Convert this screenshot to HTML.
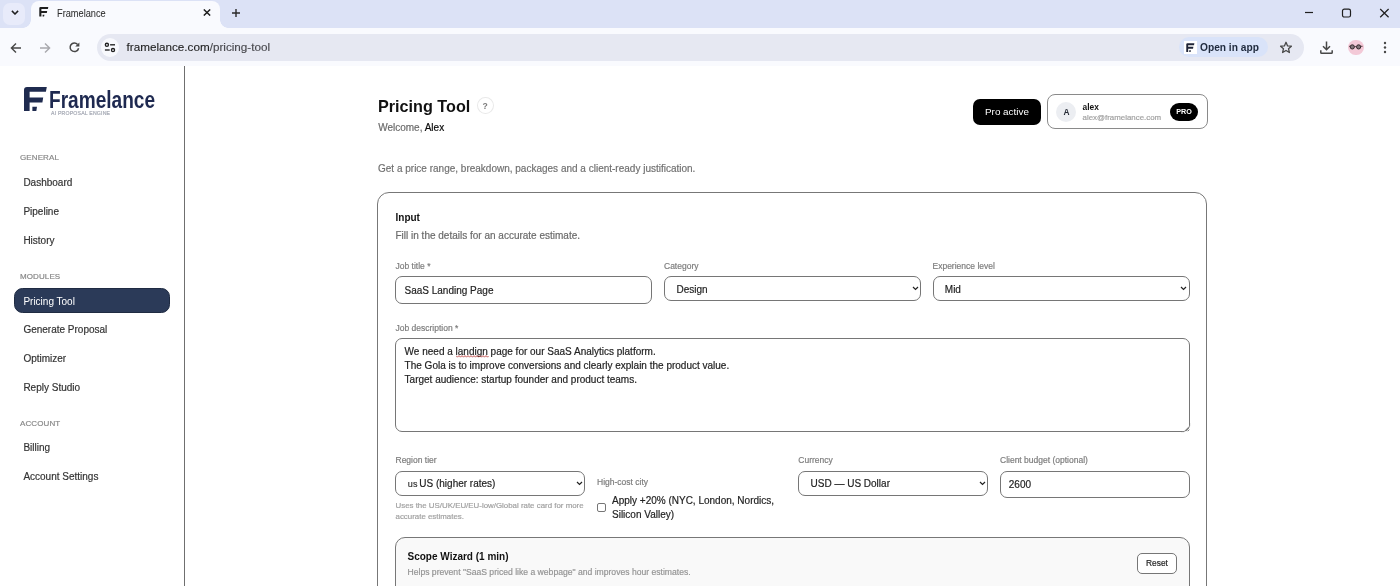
<!DOCTYPE html>
<html><head><meta charset="utf-8">
<style>
*{box-sizing:border-box}
html,body{margin:0;padding:0}
body{will-change:transform;width:1400px;height:586px;overflow:hidden;position:relative;background:#fff;font-family:"Liberation Sans",sans-serif;color:#111}
.a{position:absolute}
.t{position:absolute;line-height:1;white-space:nowrap;-webkit-text-stroke-width:0.18px}
/* chrome */
#strip{left:0;top:0;width:1400px;height:28px;background:#dce2f6}
#tabsearch{left:3px;top:2.5px;width:22px;height:22px;border-radius:7px;background:#e8ebfa}
#tab{left:31px;top:1px;width:189px;height:27px;background:#f9fafe;border-radius:8px 8px 0 0}
#tab:before,#tab:after{content:"";position:absolute;bottom:0;width:8px;height:8px;background:radial-gradient(circle at 0 0,transparent 7.5px,#f9fafe 8px)}
#tab:before{left:-8px;background:radial-gradient(circle at 0 0,transparent 7.5px,#f9fafe 8px)}
#tab:after{right:-8px;background:radial-gradient(circle at 100% 0,transparent 7.5px,#f9fafe 8px)}
#toolbar{left:0;top:28px;width:1400px;height:38px;background:#f9fafe}
#omni{left:97px;top:33.5px;width:1207px;height:27px;border-radius:14px;background:#e6e8f2}
#siteinfo{left:100.5px;top:38px;width:18.5px;height:18.5px;border-radius:50%;background:#f8f9fd}
#chip{left:1179px;top:37px;width:89px;height:19.5px;border-radius:10px;background:#d9e3f9}
/* page */
#side{left:0;top:66px;width:185px;height:520px;border-right:1px solid #6f6f6f;background:#fff}
.sec{font-size:8px;color:#878787;letter-spacing:0.1px}
.nav{font-size:10px;color:#333}
#active{left:14px;top:288px;width:155.6px;height:25px;border-radius:8.5px;background:#2b3a58;border:1px solid #1f2b42}
.card{border:1px solid #777;border-radius:12px;background:#fff}
.ctl{position:absolute;border:1px solid #767676;border-radius:7px;background:#fff}
.lbl{font-size:8.5px;color:#7c7c7c}
.val{font-size:10px;color:#222}
.chev{position:absolute;width:7px;height:5px}
</style></head>
<body>
<!-- ===== Browser chrome ===== -->
<div id="strip" class="a"></div>
<div id="tabsearch" class="a"></div>
<svg class="a" style="left:10.5px;top:10px" width="8" height="5" viewBox="0 0 8 5"><path d="M0.9 0.9 L4 4 L7.1 0.9" fill="none" stroke="#1f1f1f" stroke-width="1.5"/></svg>
<div id="tab" class="a"></div>
<svg class="a" style="left:39px;top:7.4px" width="10" height="10" viewBox="0 0 10 10"><path d="M0.3 1.2 Q0.3 0 1.5 0 H9.3 L8.9 2.1 H2.4 V3.9 H8.2 L7.8 6 H2.4 V9.6 H0.3 Z" fill="#1f1f1f"/><path d="M3.6 7.8 H5.4 L5.1 9.6 H3.6 Z" fill="#1f1f1f"/></svg>
<div class="t" style="left:57px;top:9.2px;font-size:10.2px;color:#2e2e2e;transform:scaleX(0.905);transform-origin:0 0;-webkit-text-stroke:0.05px #2e2e2e">Framelance</div>
<svg class="a" style="left:203px;top:9px" width="8" height="7" viewBox="0 0 8 7"><path d="M0.8 0.4 L7.2 6.6 M7.2 0.4 L0.8 6.6" stroke="#1f1f1f" stroke-width="1.4"/></svg>
<svg class="a" style="left:231px;top:8px" width="10" height="10" viewBox="0 0 10 10"><path d="M5 1 V9 M1 5 H9" stroke="#2a2a2a" stroke-width="1.4"/></svg>
<svg class="a" style="left:1304px;top:11px" width="10" height="3" viewBox="0 0 10 3"><path d="M1 1.5 H9" stroke="#1f1f1f" stroke-width="1.2"/></svg>
<svg class="a" style="left:1341px;top:8px" width="11" height="10" viewBox="0 0 11 10"><rect x="1.5" y="1.2" width="8" height="7.8" rx="1.8" fill="none" stroke="#1f1f1f" stroke-width="1.2"/></svg>
<svg class="a" style="left:1379px;top:8px" width="11" height="10" viewBox="0 0 11 10"><path d="M1.2 1 L9.6 9.2 M9.6 1 L1.2 9.2" stroke="#1f1f1f" stroke-width="1.2"/></svg>

<div id="toolbar" class="a"></div>
<svg class="a" style="left:10px;top:42px" width="12" height="12" viewBox="0 0 12 12"><path d="M11 6 H1.8 M6 1.4 L1.4 6 L6 10.6" fill="none" stroke="#474747" stroke-width="1.4"/></svg>
<svg class="a" style="left:39px;top:42px" width="12" height="12" viewBox="0 0 12 12"><path d="M1 6 H10.2 M6 1.4 L10.6 6 L6 10.6" fill="none" stroke="#a8a8ad" stroke-width="1.4"/></svg>
<svg class="a" style="left:68px;top:41px" width="13" height="13" viewBox="0 0 13 13"><path d="M10.6 7.3 A4.3 4.3 0 1 1 9.6 3.4" fill="none" stroke="#474747" stroke-width="1.5"/><path d="M11.4 1.4 V5.6 H7.2 Z" fill="#474747"/></svg>
<div id="omni" class="a"></div>
<div id="siteinfo" class="a"></div>
<svg class="a" style="left:104px;top:42px" width="12" height="11" viewBox="0 0 12 11"><circle cx="2.9" cy="2.8" r="1.55" fill="none" stroke="#1f1f1f" stroke-width="1.35"/><path d="M6.1 2.8 H11" stroke="#1f1f1f" stroke-width="1.35"/><path d="M0.9 8 H5.7" stroke="#1f1f1f" stroke-width="1.35"/><circle cx="9" cy="8" r="1.55" fill="none" stroke="#1f1f1f" stroke-width="1.35"/></svg>
<div class="t" style="left:126.5px;top:41.3px;font-size:11.7px;color:#1f1f1f;-webkit-text-stroke:0.12px #1f1f1f">framelance.com<span style="color:#4f4f55">/pricing-tool</span></div>
<div id="chip" class="a"></div>
<div class="a" style="left:1184px;top:41px;width:13px;height:13.3px;background:#fff"></div>
<svg class="a" style="left:1186px;top:43px" width="9" height="9.5" viewBox="0 0 10 10"><path d="M0.3 1.2 Q0.3 0 1.5 0 H9.3 L8.9 2.1 H2.4 V3.9 H8.2 L7.8 6 H2.4 V9.6 H0.3 Z" fill="#1f2437"/><path d="M3.6 7.8 H5.4 L5.1 9.6 H3.6 Z" fill="#1f2437"/></svg>
<div class="t" style="-webkit-text-stroke-width:0;left:1200px;top:43.3px;font-size:10.2px;font-weight:bold;color:#1f2a3d">Open in app</div>
<svg class="a" style="left:1279px;top:41px" width="14" height="13" viewBox="0 0 14 13"><path d="M7 1.3 L8.6 4.9 L12.4 5.2 L9.5 7.7 L10.4 11.5 L7 9.5 L3.6 11.5 L4.5 7.7 L1.6 5.2 L5.4 4.9 Z" fill="none" stroke="#474747" stroke-width="1.3" stroke-linejoin="round"/></svg>
<svg class="a" style="left:1319px;top:40px" width="15" height="15" viewBox="0 0 15 15"><path d="M7.5 1.5 V9.5 M4 6.2 L7.5 9.7 L11 6.2" fill="none" stroke="#474747" stroke-width="1.5"/><path d="M1.8 10.3 V12.4 Q1.8 13.2 2.6 13.2 H12.4 Q13.2 13.2 13.2 12.4 V10.3" fill="none" stroke="#474747" stroke-width="1.5"/></svg>
<div class="a" style="left:1348.3px;top:39.9px;width:15.4px;height:15.4px;border-radius:50%;background:#f3c9d7"></div>
<svg class="a" style="left:1348px;top:40px" width="16" height="16" viewBox="0 0 16 16"><circle cx="4.3" cy="6.9" r="2.1" fill="#85767c" stroke="#2e2326" stroke-width="0.95"/><circle cx="10.6" cy="6.9" r="2.1" fill="#85767c" stroke="#2e2326" stroke-width="0.95"/><path d="M6.4 6.6 H8.5 M1 6.3 H2.2 M12.7 6.3 H14.6" stroke="#3a2a30" stroke-width="0.8"/></svg>
<svg class="a" style="left:1383px;top:41px" width="4" height="13" viewBox="0 0 4 13"><circle cx="2" cy="2" r="1.2" fill="#474747"/><circle cx="2" cy="6.5" r="1.2" fill="#474747"/><circle cx="2" cy="11" r="1.2" fill="#474747"/></svg>

<!-- ===== Sidebar ===== -->
<div id="side" class="a"></div>
<svg class="a" style="left:23.5px;top:86.5px" width="23" height="24.5" viewBox="0 0 23 24.5"><path d="M0 3 Q0 0 3 0 H22.8 L21.9 4.8 H5.6 V10.4 H19.2 L18.4 15.6 H5.6 V24.2 H0 Z" fill="#1f2b4f"/><path d="M8.4 19.8 H13 L12.3 24.2 H8.4 Z" fill="#1f2b4f"/></svg>
<div class="t" style="-webkit-text-stroke-width:0;left:49.4px;top:88.1px;font-size:24.1px;font-weight:bold;color:#1e2950;transform:scaleX(0.792);transform-origin:0 0">Framelance</div>
<div class="t" style="left:51px;top:110.8px;font-size:5.2px;color:#a5a9b4;letter-spacing:0.18px">AI PROPOSAL ENGINE</div>

<div class="t sec" style="left:20px;top:154.1px">GENERAL</div>
<div class="t nav" style="left:23.4px;top:178.1px">Dashboard</div>
<div class="t nav" style="left:23.4px;top:207.1px">Pipeline</div>
<div class="t nav" style="left:23.4px;top:235.9px">History</div>
<div class="t sec" style="left:20px;top:272.7px">MODULES</div>
<div id="active" class="a"></div>
<div class="t nav" style="-webkit-text-stroke-width:0;left:23.4px;top:296.5px;color:#fff">Pricing Tool</div>
<div class="t nav" style="left:23.4px;top:325.1px">Generate Proposal</div>
<div class="t nav" style="left:23.4px;top:354.0px">Optimizer</div>
<div class="t nav" style="left:23.4px;top:382.6px">Reply Studio</div>
<div class="t sec" style="left:20px;top:420.0px">ACCOUNT</div>
<div class="t nav" style="left:23.4px;top:443.2px">Billing</div>
<div class="t nav" style="left:23.4px;top:471.7px">Account Settings</div>

<!-- ===== Header ===== -->
<div class="t" style="-webkit-text-stroke-width:0;left:378px;top:98.2px;font-size:16.2px;font-weight:bold;color:#111">Pricing Tool</div>
<div class="a" style="left:477px;top:97.3px;width:16.8px;height:17.2px;border-radius:50%;border:1px solid #e9e9e9;background:#fff"></div>
<div class="t" style="-webkit-text-stroke-width:0;left:482.6px;top:101.6px;font-size:8.6px;font-weight:bold;color:#7a7a7a">?</div>
<div class="t" style="left:378.2px;top:122.6px;font-size:10px;color:#6a6a6a">Welcome, <span style="color:#0a0a0a">Alex</span></div>

<div class="a" style="left:973px;top:98.5px;width:68px;height:26px;border-radius:7px;background:#000"></div>
<div class="t" style="-webkit-text-stroke-width:0;left:985px;top:106.5px;font-size:9.9px;color:#fff">Pro active</div>
<div class="a" style="left:1047px;top:94px;width:160.5px;height:35px;border-radius:8px;border:1px solid #8a8a8a;background:#fff"></div>
<div class="a" style="left:1056px;top:101.5px;width:20px;height:20px;border-radius:50%;background:#eceef2"></div>
<div class="t" style="-webkit-text-stroke-width:0;left:1063.6px;top:107.8px;font-size:8.4px;font-weight:bold;color:#262b36">A</div>
<div class="t" style="-webkit-text-stroke-width:0;left:1082.5px;top:102.8px;font-size:8.4px;font-weight:bold;color:#111">alex</div>
<div class="t" style="left:1082.5px;top:114px;font-size:7.9px;color:#a0a0a0">alex@framelance.com</div>
<div class="a" style="left:1170px;top:103px;width:28px;height:17.8px;border-radius:9px;background:#000"></div>
<div class="t" style="-webkit-text-stroke-width:0;left:1176.2px;top:107.9px;font-size:7.2px;font-weight:bold;color:#fff">PRO</div>

<div class="t" style="left:378px;top:164px;font-size:10px;color:#707070">Get a price range, breakdown, packages and a client-ready justification.</div>

<!-- ===== Input card ===== -->
<div class="a card" style="left:377px;top:192px;width:830px;height:420px"></div>
<div class="t" style="-webkit-text-stroke-width:0;left:395.5px;top:212.6px;font-size:10px;font-weight:bold;color:#111">Input</div>
<div class="t" style="left:395.5px;top:230.5px;font-size:10px;color:#6a6a6a">Fill in the details for an accurate estimate.</div>

<div class="t lbl" style="left:395.5px;top:261.8px">Job title *</div>
<div class="t lbl" style="left:664px;top:261.8px">Category</div>
<div class="t lbl" style="left:932.5px;top:261.8px">Experience level</div>
<div class="ctl" style="left:395px;top:276px;width:257px;height:28px"></div>
<div class="t val" style="left:404.5px;top:285.7px">SaaS Landing Page</div>
<div class="ctl" style="left:664px;top:276px;width:256.5px;height:25px"></div>
<div class="t val" style="left:676.5px;top:285px">Design</div>
<svg class="chev" style="left:911.5px;top:286px" viewBox="0 0 7 5"><path d="M1 1 L3.5 3.5 L6 1" fill="none" stroke="#222" stroke-width="1.2"/></svg>
<div class="ctl" style="left:932.5px;top:276px;width:257px;height:25px"></div>
<div class="t val" style="left:944.8px;top:285px">Mid</div>
<svg class="chev" style="left:1180px;top:286px" viewBox="0 0 7 5"><path d="M1 1 L3.5 3.5 L6 1" fill="none" stroke="#222" stroke-width="1.2"/></svg>

<div class="t lbl" style="left:395.5px;top:323.8px">Job description *</div>
<div class="ctl" style="left:395px;top:338px;width:794.5px;height:94px"></div>
<div class="t val" style="left:404.6px;top:345.2px;line-height:14.1px">We need a landign page for our SaaS Analytics platform.<br>The Gola is to improve conversions and clearly explain the product value.<br>Target audience: startup founder and product teams.</div>

<svg class="a" style="left:456px;top:355.3px" width="33" height="3" viewBox="0 0 33 3"><path d="M0 0.6 L1.5 2.2 L3 0.6 L4.5 2.2 L6 0.6 L7.5 2.2 L9 0.6 L10.5 2.2 L12 0.6 L13.5 2.2 L15 0.6 L16.5 2.2 L18 0.6 L19.5 2.2 L21 0.6 L22.5 2.2 L24 0.6 L25.5 2.2 L27 0.6 L28.5 2.2 L30 0.6 L31.5 2.2 L32.5 1" fill="none" stroke="#b4302f" stroke-width="0.8"/></svg>
<div class="a" style="left:1182px;top:425px;width:8px;height:8px;background:#fff"></div>
<svg class="a" style="left:1181px;top:423px" width="10" height="10" viewBox="0 0 10 10"><path d="M8.6 0 V3.2 L3.2 8.6 H0" fill="none" stroke="#767676" stroke-width="1"/><path d="M4.6 8.2 L8.2 4.6 M6.6 8.2 L8.2 6.6" stroke="#555" stroke-width="0.9"/></svg>
<div class="t lbl" style="left:395.5px;top:456.2px">Region tier</div>
<div class="ctl" style="left:395px;top:471px;width:190px;height:24.5px"></div>
<div class="t val" style="left:407.8px;top:478.5px"><span style="font-size:9px;color:#333;letter-spacing:0.15px;margin-right:-1.1px">us</span> US (higher rates)</div>
<svg class="chev" style="left:576px;top:480.5px" viewBox="0 0 7 5"><path d="M1 1 L3.5 3.5 L6 1" fill="none" stroke="#222" stroke-width="1.2"/></svg>
<div class="t" style="left:395.5px;top:499.8px;font-size:7.9px;color:#a0a0a0;line-height:11.2px">Uses the US/UK/EU/EU-low/Global rate card for more<br>accurate estimates.</div>

<div class="t lbl" style="left:597px;top:478.2px">High-cost city</div>
<div class="a" style="left:596.8px;top:503.1px;width:9px;height:8.8px;border:1px solid #767676;border-radius:2px;background:#fff"></div>
<div class="t val" style="left:612px;top:494.1px;line-height:14px">Apply +20% (NYC, London, Nordics,<br>Silicon Valley)</div>

<div class="t lbl" style="left:798.3px;top:456.2px">Currency</div>
<div class="ctl" style="left:798px;top:471px;width:189.5px;height:24.5px"></div>
<div class="t val" style="left:810.5px;top:479.2px">USD — US Dollar</div>
<svg class="chev" style="left:979px;top:480.5px" viewBox="0 0 7 5"><path d="M1 1 L3.5 3.5 L6 1" fill="none" stroke="#222" stroke-width="1.2"/></svg>
<div class="t lbl" style="left:1000px;top:456.2px">Client budget (optional)</div>
<div class="ctl" style="left:1000px;top:471px;width:189.5px;height:26.5px"></div>
<div class="t val" style="left:1008.8px;top:479.6px">2600</div>

<!-- ===== Scope wizard ===== -->
<div class="a" style="left:395px;top:537px;width:794.5px;height:100px;border:1px solid #777;border-radius:10px;background:#f9f9f9"></div>
<div class="t" style="-webkit-text-stroke-width:0;left:407.5px;top:551.5px;font-size:10px;font-weight:bold;color:#111">Scope Wizard (1 min)</div>
<div class="t" style="left:407.5px;top:568px;font-size:8.6px;color:#949494">Helps prevent "SaaS priced like a webpage" and improves hour estimates.</div>
<div class="a" style="left:1136.5px;top:553px;width:40.5px;height:20.7px;border:1px solid #767676;border-radius:5px;background:#fff"></div>
<div class="t" style="left:1146px;top:558.9px;font-size:8.4px;color:#222">Reset</div>
</body></html>
